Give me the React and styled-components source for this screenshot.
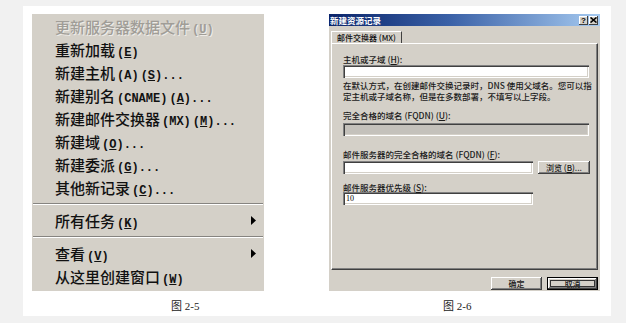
import React from "react";
import styled, { createGlobalStyle } from "styled-components";

const GlobalStyle = createGlobalStyle`
  html, body {
    margin: 0;
    padding: 0;
    background: #f1f1f1;
  }
  body {
    width: 626px;
    height: 323px;
    overflow: hidden;
    font-family: "Noto Sans CJK SC", "Liberation Sans", sans-serif;
  }
`;

const menuItems = [
  { label: "更新服务器数据文件", key: "U", disabled: true },
  { label: "重新加载", key: "E" },
  { label: "新建主机", pre: "(A)", key: "S", tail: "..." },
  { label: "新建别名", pre: "(CNAME)", key: "A", tail: "..." },
  { label: "新建邮件交换器", pre: "(MX)", key: "M", tail: "..." },
  { label: "新建域", key: "O", tail: "..." },
  { label: "新建委派", key: "G", tail: "..." },
  { label: "其他新记录", key: "C", tail: "..." },
  "sep",
  { label: "所有任务", key: "K", sub: true },
  "sep",
  { label: "查看", key: "V", sub: true },
  { label: "从这里创建窗口", key: "W" },
];

function Arrow() {
  return (
    <svg width="5" height="9" viewBox="0 0 5 9">
      <path d="M0 0 L5 4.5 L0 9 Z" fill="#000" />
    </svg>
  );
}

function CloseGlyph() {
  return (
    <svg width="7" height="6" viewBox="0 0 7 6">
      <path d="M0.5 0.5 L6.5 5.5 M6.5 0.5 L0.5 5.5" stroke="#000" strokeWidth="1.6" />
    </svg>
  );
}

function ContextMenu() {
  return (
    <Menu>
      {menuItems.map((it, i) =>
        it === "sep" ? (
          <Separator key={i} />
        ) : (
          <Item key={i} $disabled={it.disabled}>
            <span>
              {it.label}
              {it.pre && <Latin>{it.pre}</Latin>}
              <Latin>
                (<u>{it.key}</u>){it.tail}
              </Latin>
            </span>
            {it.sub && <Arrow />}
          </Item>
        )
      )}
    </Menu>
  );
}

function RecordDialog() {
  return (
    <Dialog>
      <TitleBar>
        <TitleText>新建资源记录</TitleText>
        <CapButtons>
          <CapButton>?</CapButton>
          <CapButton>
            <CloseGlyph />
          </CapButton>
        </CapButtons>
      </TitleBar>
      <DialogBody>
        <TabStrip>
          <Tab>邮件交换器 (MX)</Tab>
        </TabStrip>
        <TabPanel>
          <FieldLabel>
            主机或子域 (<u>H</u>):
          </FieldLabel>
          <TextBox $w={246} $mt={1} />
          <Note>
            <NoteLine>在默认方式，在创建邮件交换记录时，DNS 使用父域名。您可以指</NoteLine>
            <NoteLine>定主机或子域名称，但是在多数部署，不填写以上字段。</NoteLine>
          </Note>
          <FieldLabel $mt={8}>
            完全合格的域名 (FQDN) (<u>U</u>):
          </FieldLabel>
          <TextBox $w={246} $mt={3} $disabled />
          <FieldLabel $mt={13}>
            邮件服务器的完全合格的域名 (FQDN) (<u>F</u>):
          </FieldLabel>
          <FieldRow>
            <TextBox $w={190} />
            <PushButton $w={52}>
              浏览 (<u>B</u>)...
            </PushButton>
          </FieldRow>
          <FieldLabel $mt={8}>
            邮件服务器优先级 (<u>S</u>):
          </FieldLabel>
          <TextBox $w={190}>10</TextBox>
        </TabPanel>
        <ButtonRow>
          <PushButton $w={51}>确定</PushButton>
          <PushButton $w={51} $default>
            取消
          </PushButton>
        </ButtonRow>
      </DialogBody>
    </Dialog>
  );
}

export default function App() {
  return (
    <>
      <GlobalStyle />
      <Page>
        <Sheet>
          <Figure>
            <ContextMenu />
            <Caption $indent={139}>图 2-5</Caption>
          </Figure>
          <Figure>
            <RecordDialog />
            <Caption $indent={114}>图 2-6</Caption>
          </Figure>
        </Sheet>
      </Page>
    </>
  );
}

const Page = styled.div`
  padding: 6px 0 0 23px;
`;

const Sheet = styled.div`
  width: 588px;
  height: 310px;
  box-sizing: border-box;
  background: #fff;
  padding: 8px 11px 0 9px;
  display: flex;
  gap: 65px;
  align-items: flex-start;
`;

const Figure = styled.div`
  display: flex;
  flex-direction: column;
`;

const Caption = styled.div`
  padding: 10px 0 0 ${(p) => p.$indent}px;
  font-family: "Liberation Serif", "Noto Sans CJK SC", serif;
  font-size: 11px;
  line-height: 11px;
  color: #222;
`;

const Menu = styled.div`
  width: 232px;
  height: 277px;
  box-sizing: border-box;
  background: #d4d0c8;
  padding: 1px 0 3px;
`;

const Item = styled.div`
  height: 23px;
  display: flex;
  align-items: center;
  justify-content: space-between;
  padding: 0 8px 0 23px;
  font-size: 15px;
  font-weight: 500;
  color: ${(p) => (p.$disabled ? "#a09d97" : "#111")};
  text-shadow: ${(p) => (p.$disabled ? "1px 1px 0 #eeece8" : "none")};
  white-space: nowrap;
`;

const Latin = styled.span`
  font-family: "Liberation Mono", monospace;
  font-size: 12px;
  font-weight: 700;
  margin-left: 2px;
  u {
    text-underline-offset: 1px;
  }
`;

const Separator = styled.div`
  height: 10px;
  margin: 0 1px;
  display: flex;
  flex-direction: column;
  justify-content: center;
  &::before {
    content: "";
    height: 1px;
    background: #868480;
  }
  &::after {
    content: "";
    height: 1px;
    background: #fff;
  }
`;

const Dialog = styled.div`
  width: 271px;
  height: 277px;
  background: #d4d0c8;
  display: flex;
  flex-direction: column;
`;

const TitleBar = styled.div`
  height: 12px;
  display: flex;
  align-items: center;
  justify-content: space-between;
  padding: 0 2px 0 1px;
  background: linear-gradient(to right, #0a246a 0%, #3b62a8 45%, #a6caf0 100%);
`;

const TitleText = styled.span`
  color: #fff;
  font-size: 8.5px;
  font-weight: 700;
  line-height: 12px;
`;

const CapButtons = styled.div`
  display: flex;
  gap: 1px;
`;

const CapButton = styled.div`
  width: 9px;
  height: 9px;
  background: #d4d0c8;
  box-shadow: inset -1px -1px #404040, inset 1px 1px #fff;
  display: flex;
  align-items: center;
  justify-content: center;
  font-family: "Liberation Sans", sans-serif;
  font-size: 8px;
  font-weight: 700;
  line-height: 9px;
  color: #000;
`;

const DialogBody = styled.div`
  flex: 1;
  padding: 5px 2px 1px;
  display: flex;
  flex-direction: column;
`;

const TabStrip = styled.div`
  height: 12px;
  display: flex;
`;

const Tab = styled.div`
  width: 71px;
  box-sizing: border-box;
  padding-left: 5px;
  border-top: 1px solid #fff;
  border-left: 1px solid #fff;
  border-right: 1px solid #404040;
  font-size: 8px;
  font-weight: 500;
  line-height: 11px;
  color: #111;
  white-space: nowrap;
`;

const TabPanel = styled.div`
  height: 227px;
  box-sizing: border-box;
  padding: 10px 0 0 11px;
  border-top: 1px solid #fff;
  border-left: 1px solid #fff;
  border-right: 1px solid #404040;
  border-bottom: 1px solid #404040;
  box-shadow: inset -1px -1px #808080;
`;

const FieldLabel = styled.div`
  margin-top: ${(p) => p.$mt || 0}px;
  font-size: 8.5px;
  font-weight: 500;
  line-height: 10px;
  color: #1a1a1a;
  white-space: nowrap;
`;

const Note = styled.div`
  margin-top: 2px;
  display: flex;
  flex-direction: column;
`;

const NoteLine = styled.div`
  height: 11px;
  font-size: 8.5px;
  font-weight: 500;
  line-height: 11px;
  color: #1a1a1a;
  white-space: nowrap;
`;

const TextBox = styled.div`
  width: ${(p) => p.$w}px;
  height: 13px;
  margin-top: ${(p) => p.$mt || 0}px;
  box-sizing: border-box;
  padding: 2px 0 0 3px;
  background: ${(p) => (p.$disabled ? "#c4c1bb" : "#fff")};
  box-shadow: inset 1px 1px #808080, inset 2px 2px #404040, inset -1px -1px #fff,
    inset -2px -2px #d4d0c8;
  font-family: "Liberation Serif", serif;
  font-size: 8px;
  line-height: 10px;
  color: #000;
`;

const FieldRow = styled.div`
  margin-top: 2px;
  display: flex;
  gap: 5px;
`;

const PushButton = styled.div`
  width: ${(p) => p.$w}px;
  height: 13px;
  box-sizing: border-box;
  display: flex;
  align-items: center;
  justify-content: center;
  background: #d4d0c8;
  border: ${(p) => (p.$default ? "1px solid #000" : "none")};
  box-shadow: inset -1px -1px #404040, inset 1px 1px #fff, inset -2px -2px #808080;
  outline: ${(p) => (p.$default ? "1px solid #333" : "none")};
  outline-offset: -4px;
  font-size: 8px;
  font-weight: 500;
  line-height: 10px;
  color: #1a1a1a;
  white-space: nowrap;
`;

const ButtonRow = styled.div`
  margin-top: 7px;
  display: flex;
  justify-content: flex-end;
  gap: 5px;
`;
